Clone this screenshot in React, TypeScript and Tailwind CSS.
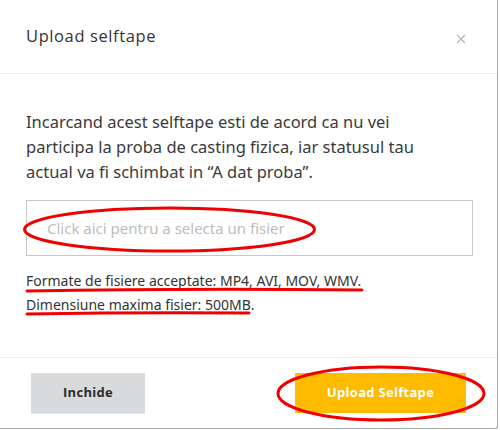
import React from "react";

export default function App() {
  return (
    <div className="w-[500px] h-[430px] bg-white relative overflow-hidden">
      <div className="w-[498px] h-[429px] bg-white border-r border-b border-[#a9a9a9] rounded-br-[3px] flex flex-col">
        {/* header */}
        <div className="h-[74px] shrink-0 flex items-center justify-between pl-[26px] pr-[31px] border-b border-[#e9ecef]">
          <div className="text-[16.5px] text-[#333] tracking-[0.6px]" style={{ fontFamily: '"Open Sans", sans-serif' }}>
            Upload selftape
          </div>
          <svg width="10" height="10" viewBox="0 0 10 10" className="mt-[4px]">
            <path d="M1 1 L9 9 M9 1 L1 9" stroke="#b5b5b5" strokeWidth="1.2" />
          </svg>
        </div>
        {/* body */}
        <div className="flex-1 px-[26px] pt-[35px]" style={{ fontFamily: '"Noto Sans", sans-serif' }}>
          <p className="w-[420px] text-[16.5px] leading-[25px] text-[#3a3a3a]">
            Incarcand acest selftape esti de acord ca nu vei participa la proba de casting fizica, iar statusul tau actual va fi schimbat in “A dat proba”.
          </p>
          <div className="relative mt-[16px] h-[56px] w-[447px] border border-[#c8c8c8] flex items-center pl-[20px]">
            <span className="text-[15px] text-[#bdbdbd]">Click aici pentru a selecta un fisier</span>
          </div>
          <div className="mt-[13px] text-[14px] leading-[24px] text-[#333]">
            <div>Formate de fisiere acceptate: MP4, AVI, MOV, WMV.</div>
            <div>Dimensiune maxima fisier: 500MB.</div>
          </div>
        </div>
        {/* footer */}
        <div className="h-[71px] shrink-0 border-t border-[#e9ecef] flex items-start justify-between pl-[31px] pr-[31px] pt-[15px]" style={{ fontFamily: '"Open Sans", sans-serif' }}>
          <button className="w-[114px] h-[40px] bg-[#d9dadc] text-[#2b2b2b] text-[13px] font-bold tracking-[0.3px] shadow-[0_1px_1px_rgba(0,0,0,0.08)]">
            Inchide
          </button>
          <button className="w-[171px] h-[40px] bg-[#ffbb00] text-white text-[13px] font-bold tracking-[0.3px]">
            Upload Selftape
          </button>
        </div>
      </div>
      {/* red annotations */}
      <svg className="absolute inset-0 pointer-events-none" width="500" height="430">
        <ellipse cx="169.5" cy="229.5" rx="145" ry="21.5" fill="none" stroke="#f00000" strokeWidth="3" />
        <path d="M27 291 Q 190 288 362 290" stroke="#f00000" strokeWidth="3" fill="none" strokeLinecap="round" />
        <path d="M27 314 Q 140 312 249 313" stroke="#f00000" strokeWidth="3" fill="none" strokeLinecap="round" />
        <ellipse cx="381" cy="393.5" rx="103" ry="26.5" fill="none" stroke="#f00000" strokeWidth="3" />
      </svg>
    </div>
  );
}
